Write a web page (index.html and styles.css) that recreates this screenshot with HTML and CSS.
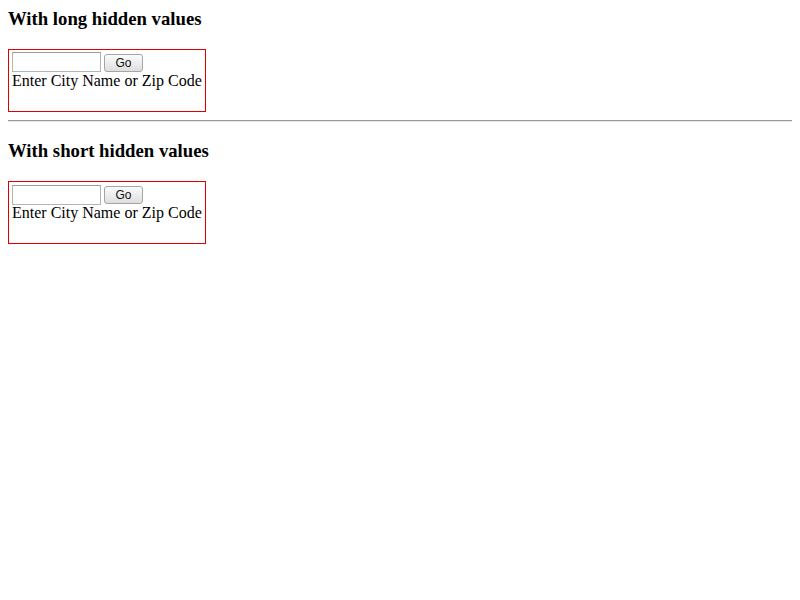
FILE: index.html
```html
<!DOCTYPE html>
<html>
<head>
<meta charset="utf-8">
<title>Weather widget test</title>
<link rel="stylesheet" href="styles.css">
</head>
<body>
<h3 class="title first">With long hidden values</h3>
<div class="widget">
  <div class="row">
    <input class="city" type="text">
    <button class="go" type="button">Go</button>
  </div>
  <div class="label">Enter City Name or Zip Code</div>
</div>
<hr class="sep">
<h3 class="title">With short hidden values</h3>
<div class="widget">
  <div class="row">
    <input class="city" type="text">
    <button class="go" type="button">Go</button>
  </div>
  <div class="label">Enter City Name or Zip Code</div>
</div>
</body>
</html>
```

FILE: styles.css
```css
html, body {
  background: #fff;
}
body {
  margin: 8px;
  font-family: "Liberation Serif", "Times New Roman", serif;
  font-size: 16px;
  color: #000;
}
.title {
  font-family: "Liberation Serif", "Times New Roman", serif;
  font-size: 18.72px;
  font-weight: bold;
  margin: 18.72px 0;
  line-height: 22px;
}
.title.first {
  margin-top: 0;
}
.widget {
  box-sizing: border-box;
  width: 198px;
  height: 63px;
  border: 1px solid #e00000;
  padding: 2px 3px;
}
.row {
  display: flex;
  align-items: center;
  height: 21px;
}
.city {
  box-sizing: border-box;
  width: 89px;
  height: 20px;
  margin: 0;
  padding: 0 2px;
  border: 1px solid #b4b4b4;
  border-top-color: #9c9c9c;
  background: #fff;
  font-size: 13px;
}
.go {
  box-sizing: border-box;
  width: 39px;
  height: 18px;
  margin: 1px 0 0 3px;
  padding: 0;
  border: 1px solid #a5a5a5;
  border-radius: 3px;
  background: linear-gradient(#fbfbfb, #ececec 55%, #dedede);
  font-family: "Liberation Sans", "DejaVu Sans", sans-serif;
  font-size: 12px;
  font-weight: 400;
  line-height: 16px;
  color: #111;
}
.label {
  line-height: 18px;
  margin-top: -1px;
  white-space: nowrap;
}
.sep {
  margin: 8px 0;
  height: 0;
  border: 0;
  border-top: 1px solid #9a9a9a;
  border-bottom: 1px solid #e6e6e6;
}
```
